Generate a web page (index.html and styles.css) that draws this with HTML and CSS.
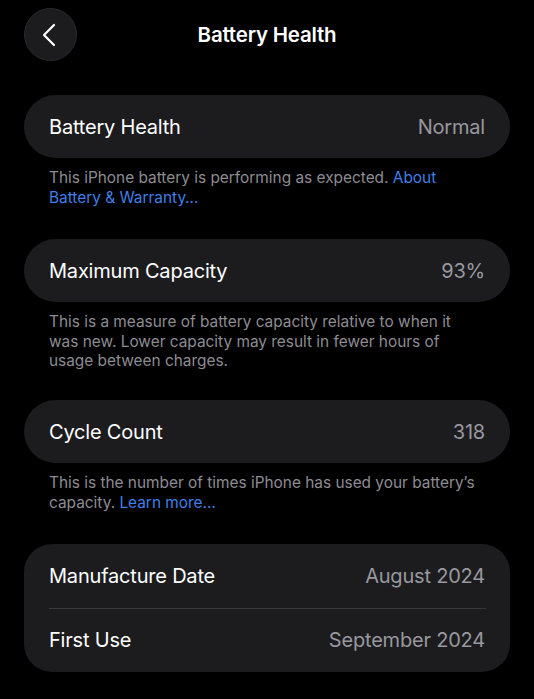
FILE: index.html
```html
<!DOCTYPE html>
<html lang="en">
<head>
<meta charset="utf-8">
<title>Battery Health</title>
<link rel="stylesheet" href="styles.css">
</head>
<body>
<div class="screen">
  <header class="nav">
    <button class="back" aria-label="Back">
      <svg width="14" height="24" viewBox="0 0 14 24"><path d="M12 2 L2 12 L12 22" fill="none" stroke="#fff" stroke-width="2.2" stroke-linecap="round" stroke-linejoin="round"/></svg>
    </button>
    <h1 class="title">Battery Health</h1>
  </header>

  <main class="content">
    <section class="group">
      <div class="card pill">
        <div class="row"><span class="label">Battery Health</span><span class="value">Normal</span></div>
      </div>
      <p class="note">This iPhone battery is performing as expected. <a class="link">About Battery &amp; Warranty…</a></p>
    </section>

    <section class="group group-tight">
      <div class="card pill">
        <div class="row"><span class="label">Maximum Capacity</span><span class="value">93%</span></div>
      </div>
      <p class="note">This is a measure of battery capacity relative to when it was new. Lower capacity may result in fewer hours of usage between charges.</p>
    </section>

    <section class="group">
      <div class="card pill">
        <div class="row"><span class="label">Cycle Count</span><span class="value">318</span></div>
      </div>
      <p class="note">This is the number of times iPhone has used your battery’s capacity. <a class="link">Learn more…</a></p>
    </section>

    <section class="group">
      <div class="card list">
        <div class="row"><span class="label">Manufacture Date</span><span class="value">August 2024</span></div>
        <div class="divider"></div>
        <div class="row"><span class="label">First Use</span><span class="value">September 2024</span></div>
      </div>
    </section>
  </main>
</div>
</body>
</html>
```

FILE: styles.css
```css
* { box-sizing: border-box; }
html, body { margin: 0; padding: 0; background: #000; }
body {
  font-family: Inter, "Noto Sans", "Liberation Sans", sans-serif;
  color: #fff;
  width: 534px;
  height: 699px;
  overflow: hidden;
}
.screen { padding: 8px 24px 0; }
.nav {
  position: relative;
  height: 53px;
  display: flex;
  align-items: center;
  justify-content: center;
}
.back {
  position: absolute;
  left: 0;
  top: 0;
  width: 53px;
  height: 53px;
  border-radius: 50%;
  background: #1c1c1e;
  border: 1px solid #2a2a2c;
  display: flex;
  align-items: center;
  justify-content: center;
  padding: 0 3px 0 0;
}
.title {
  margin: 0;
  font-size: 20.5px;
  font-weight: 600;
  letter-spacing: -0.2px;
}
.content {
  margin-top: 34px;
  display: flex;
  flex-direction: column;
}
.group { margin-bottom: 31.6px; }
.group-tight { margin-bottom: 29px; }
.card {
  background: #1c1c1e;
}
.pill { border-radius: 32px; }
.list { border-radius: 28px; }
.row {
  height: 63px;
  display: flex;
  align-items: center;
  justify-content: space-between;
  padding: 0 25px;
  font-size: 20px;
  letter-spacing: -0.2px;
}
.list .row { height: 63.5px; }
.label { color: #fff; }
.value { color: #98989e; }
.divider {
  height: 1px;
  background: #38383a;
  margin: 0 24px 0 25px;
}
.note {
  margin: 0;
  padding: 10px 30px 0 25px;
  font-size: 15.4px;
  line-height: 19.7px;
  color: #8c8c92;
}
.link { color: #3f7fe6; }
```
